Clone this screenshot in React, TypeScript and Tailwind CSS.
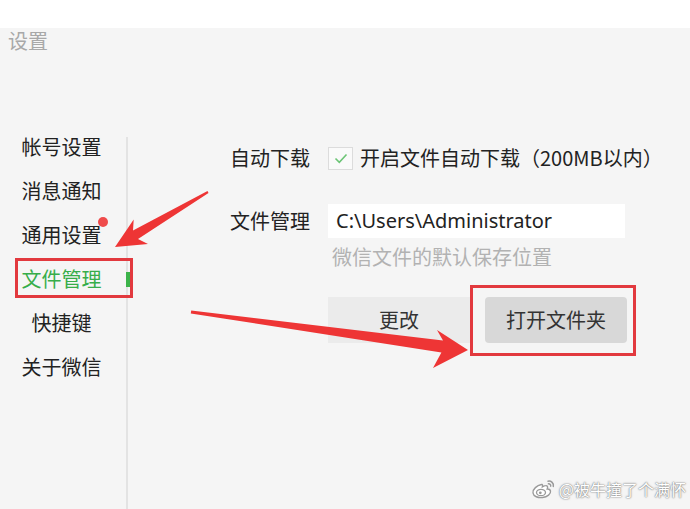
import React from "react";

const font = "font-['Noto_Sans_CJK_SC','Noto_Sans',sans-serif]";

const menu = ["帐号设置", "消息通知", "通用设置", "文件管理", "快捷键", "关于微信"];

const WeiboLogo = () => (
  <svg width="26" height="20" viewBox="0 0 26 20" fill="none">
    <path
      d="M10.5 5.5C6 6.5 1.5 10 2 14c.5 3.5 5 5 9.5 4.5 5-.6 8.5-3.6 8-6.3-.3-1.7-2-2.3-3.3-2.2 .8-1.8.4-3.6-1.6-3.4-1.3.1-2.4.8-3.2 1.2.4-1.6-.2-2.7-.9-2.3z"
      fill="#fff"
      stroke="#9a9a9a"
      strokeWidth="1.4"
    />
    <ellipse cx="10" cy="13.5" rx="4.5" ry="3.2" stroke="#9a9a9a" strokeWidth="1.3" fill="#fff" />
    <circle cx="9.3" cy="13.8" r="1.4" fill="#9a9a9a" />
    <path d="M17 2.2c3.2-.6 6 2 5.3 5.2" stroke="#9a9a9a" strokeWidth="1.5" strokeLinecap="round" />
    <path d="M17.4 4.8c1.5-.2 2.6 1 2.3 2.4" stroke="#9a9a9a" strokeWidth="1.4" strokeLinecap="round" />
  </svg>
);

export default function App() {
  return (
    <div className={`relative w-[690px] h-[509px] overflow-hidden bg-[#f5f5f5] flex flex-col ${font}`}>
      <div className="h-[28px] bg-white" />
      <div className="h-[26px] pl-[8px] text-[20px] leading-[26px] text-[#a8a8a8]">设置</div>

      <div className="flex flex-1">
        {/* sidebar */}
        <div className="w-[126px] pt-[71px] pr-[3px] flex flex-col">
          {menu.map((m) => (
            <div
              key={m}
              className={`relative h-[44px] flex items-center justify-center text-[20px] ${
                m === "文件管理" ? "text-[#37ad4a]" : "text-[#222]"
              }`}
            >
              {m}
              {m === "通用设置" && (
                <span className="absolute left-[98px] top-[4px] w-[10px] h-[10px] rounded-full bg-[#ef4b4b]" />
              )}
              {m === "文件管理" && (
                <>
                  <span className="absolute right-[-7px] top-[15px] w-[4px] h-[15px] bg-[#3cb34a]" />
                  <span className="absolute left-[15px] top-[1px] w-[118px] h-[40px] border-[3px] border-[#e2393e]" />
                </>
              )}
            </div>
          ))}
        </div>
        <div className="w-[2px] mt-[83px] bg-[#e3e3e3]" />

        {/* content */}
        <div className="flex flex-col pl-[102px] pt-[92px] text-[20px] text-[#222]">
          <div className="flex items-center h-[24px]">
            <div className="w-[98px]">自动下载</div>
            <div className="w-[25px] h-[23px] border border-[#dcdcdc] bg-[#fafafa] flex items-center justify-center">
              <svg width="14" height="11" viewBox="0 0 14 11" fill="none">
                <path d="M1.5 5.5l3.8 3.8L12.5 1.5" stroke="#6cc576" strokeWidth="1.6" />
              </svg>
            </div>
            <div className="ml-[7px]">开启文件自动下载（200MB以内）</div>
          </div>

          <div className="flex items-center mt-[34px] h-[34px]">
            <div className="w-[98px]">文件管理</div>
            <div className="w-[297px] h-[34px] bg-white flex items-center pl-[8px] text-[#222] font-['Noto_Sans',sans-serif] text-[20px]">
              C:\Users\Administrator
            </div>
          </div>
          <div className="ml-[102px] mt-[8px] leading-[22px] text-[#b2b2b2]">微信文件的默认保存位置</div>

          <div className="flex ml-[98px] mt-[29px] gap-[15px]">
            <div className="w-[142px] h-[46px] bg-[#ebebeb] flex items-center justify-center text-[#333]">更改</div>
            <div className="relative w-[142px] h-[46px] bg-[#d8d8d8] rounded-[4px] flex items-center justify-center text-[#333]">
              打开文件夹
              <span className="absolute left-[-15px] right-[-9px] top-[-12px] bottom-[-13px] border-[3px] border-[#e2393e]" />
            </div>
          </div>
        </div>
      </div>

      {/* annotation arrows */}
      <svg className="absolute left-0 top-0 pointer-events-none" width="690" height="509" viewBox="0 0 690 509">
        <polygon
          points="115,247 148,244 138,239 208.5,193 207.5,191 133,230.5 133.7,219.6"
          fill="#ee3535"
        />
        <polygon
          points="468,350 433,368 441.4,352.4 190.8,313.4 191.2,310.6 443,340.6 437,330"
          fill="#ee3535"
        />
      </svg>

      {/* watermark */}
      <div className="absolute right-[4px] bottom-[8px] flex items-center gap-[2px]">
        <WeiboLogo />
        <span className="text-[16px] text-white [text-shadow:0_0_2px_#777,0_0_1px_#777]">@被牛撞了个满怀</span>
      </div>
    </div>
  );
}
